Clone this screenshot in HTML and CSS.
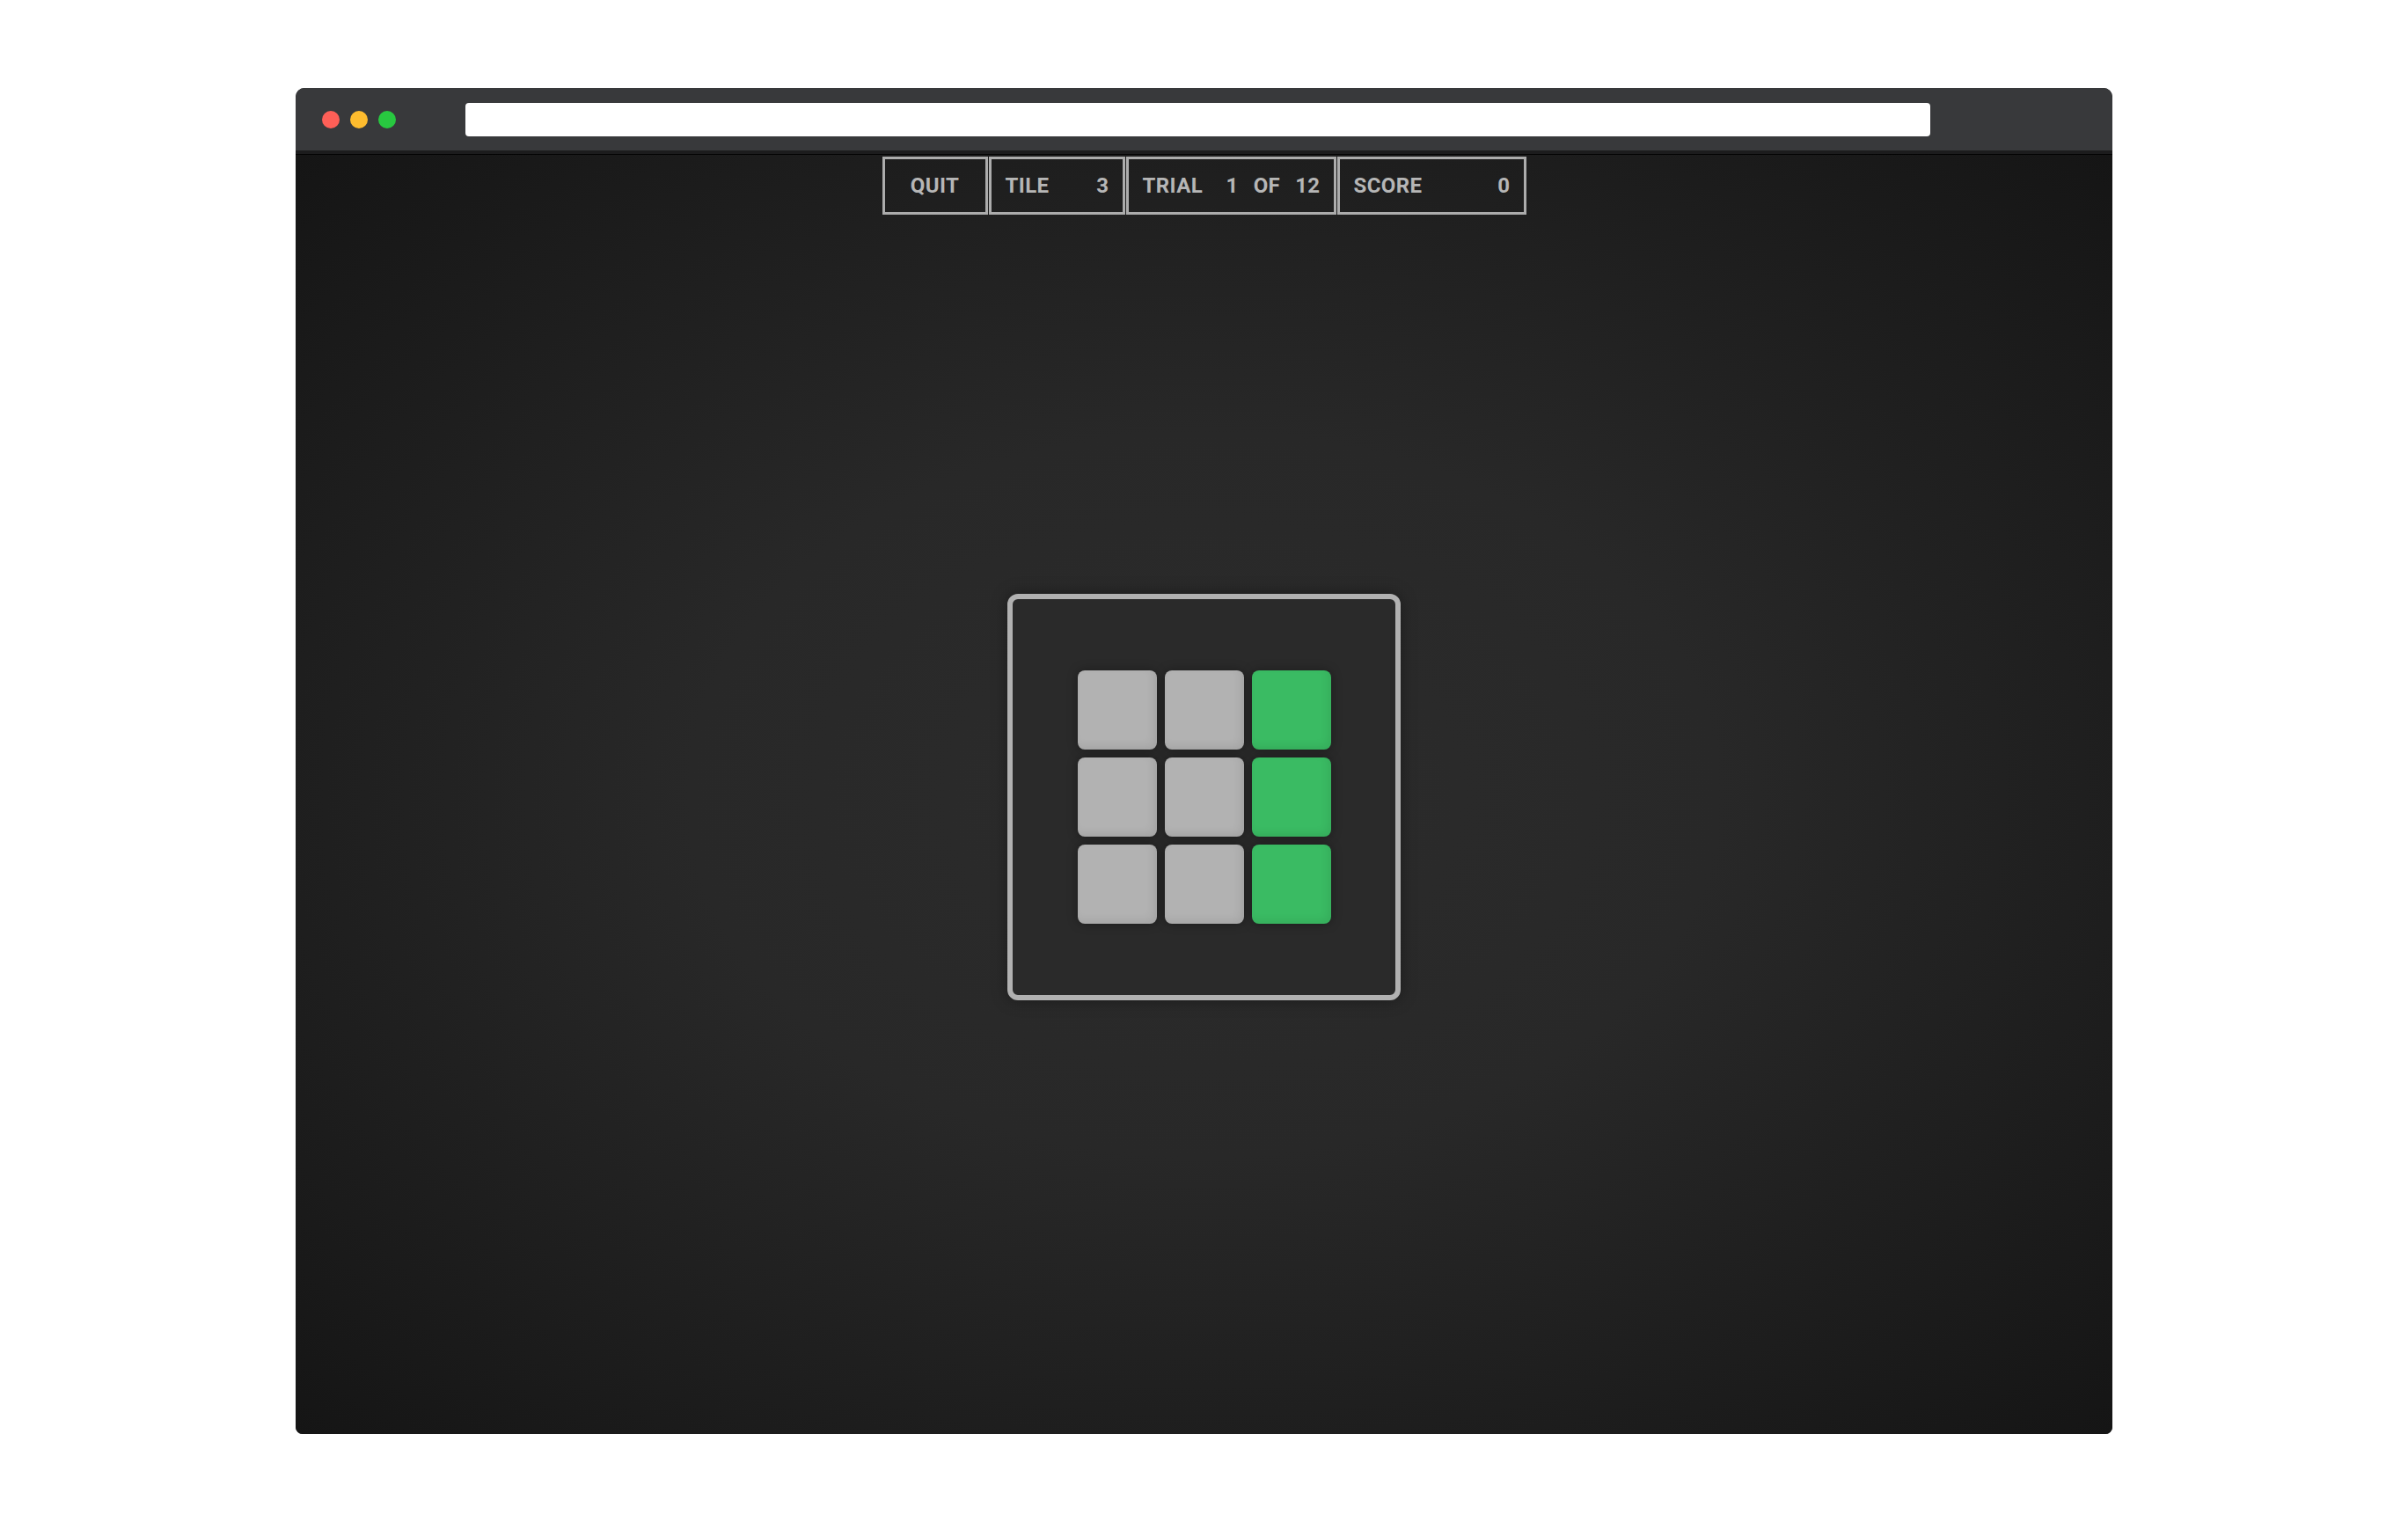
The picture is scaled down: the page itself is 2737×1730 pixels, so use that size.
FILE: index.html
```html
<!DOCTYPE html>
<html lang="en">
<head>
<meta charset="utf-8">
<title>Tile Memory</title>
<link rel="stylesheet" href="styles.css">
</head>
<body>
<div class="window">
  <div class="titlebar">
    <div class="lights">
      <span class="light red"></span>
      <span class="light yellow"></span>
      <span class="light green"></span>
    </div>
    <div class="address"></div>
  </div>
  <div class="divider"></div>
  <main class="content">
    <nav class="toolbar">
      <div class="cell quit">QUIT</div>
      <div class="cell tile"><span>TILE</span><span>3</span></div>
      <div class="cell trial"><span>TRIAL</span><span class="count"><span>1</span><span>OF</span><span>12</span></span></div>
      <div class="cell score"><span>SCORE</span><span>0</span></div>
    </nav>
    <section class="stage">
      <div class="board">
        <div class="grid">
          <div class="sq"></div><div class="sq"></div><div class="sq on"></div>
          <div class="sq"></div><div class="sq"></div><div class="sq on"></div>
          <div class="sq"></div><div class="sq"></div><div class="sq on"></div>
        </div>
      </div>
    </section>
    <div class="spacer"></div>
  </main>
</div>
</body>
</html>
```

FILE: styles.css
```css
* { box-sizing: border-box; }
html, body { margin: 0; padding: 0; background: #ffffff; }
body { padding-top: 100px; font-family: Roboto, "Liberation Sans", sans-serif; }

.window {
  width: 2065px;
  height: 1530px;
  margin: 0 auto;
  border-radius: 10px 10px 8px 8px;
  overflow: hidden;
  display: flex;
  flex-direction: column;
  background: #1a1a1a;
}

.titlebar {
  height: 71px;
  background: #38393b;
  display: flex;
  align-items: center;
  padding-left: 30px;
}
.lights { display: flex; gap: 12px; width: 163px; }
.light { width: 20px; height: 20px; border-radius: 50%; display: block; }
.red { background: #fe5f57; }
.yellow { background: #febc2e; }
.green { background: #28c840; }
.address {
  width: 1665px;
  height: 38px;
  background: #ffffff;
  border-radius: 4px;
  margin-top: 1px;
}

.divider {
  height: 5px;
  background: linear-gradient(#1c1c1d 0 4px, #030303 4px 5px);
}

.content {
  flex: 1;
  display: grid;
  grid-template-rows: 68px 1fr 62px;
  background: radial-gradient(ellipse farthest-corner at 50% 50%, #2c2c2c 0%, #282828 40%, #151515 100%);
}

.toolbar {
  display: flex;
  justify-content: center;
  gap: 1px;
  padding-top: 2px;
}
.cell {
  height: 66px;
  border: 3px solid #acacac;
  display: flex;
  align-items: center;
  justify-content: space-between;
  padding: 0 15px 0 16px;
  color: #b6b6b6;
  font-size: 24px;
  font-weight: 700;
  letter-spacing: 0.4px;
}
.quit { width: 120px; justify-content: center; padding: 0; }
.tile { width: 155px; }
.trial { width: 239px; }
.score { width: 215px; }
.count { display: flex; gap: 17px; }

.stage {
  display: flex;
  align-items: center;
  justify-content: center;
}
.board {
  width: 447px;
  height: 462px;
  border: 6px solid #b1b1b1;
  border-radius: 12px;
  display: flex;
  align-items: center;
  justify-content: center;
  background: #2a2a2a;
  box-shadow: 0 0 18px rgba(0,0,0,0.35);
}
.grid {
  display: grid;
  grid-template-columns: repeat(3, 90px);
  grid-template-rows: repeat(3, 90px);
  gap: 9px;
}
.sq {
  border-radius: 8px;
  background: #b2b2b2;
  box-shadow: inset -4px -4px 10px rgba(0,0,0,0.07), 0 0 12px rgba(0,0,0,0.35);
}
.sq.on { background: #3abb63; }
```
